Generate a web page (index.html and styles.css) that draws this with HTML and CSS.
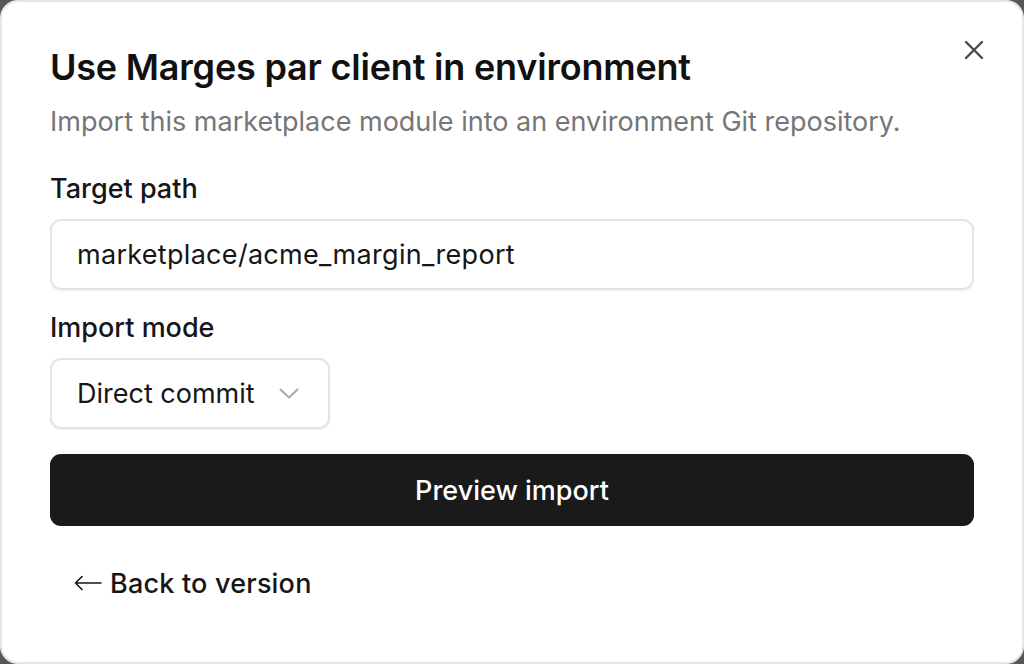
FILE: index.html
```html
<!DOCTYPE html>
<html lang="en">
<head>
  <meta charset="UTF-8" />
  <meta name="viewport" content="width=device-width, initial-scale=1.0" />
  <title>Use in environment</title>
  <link rel="stylesheet" href="styles.css">
</head>
<body>
  <div class="dialog">
    <button class="close" aria-label="Close">
      <svg width="20" height="20" viewBox="0 0 20 20" fill="none" stroke="currentColor" stroke-width="2.4" stroke-linecap="round">
        <path d="M2 2 L18 18 M18 2 L2 18" />
      </svg>
    </button>
    <h2 class="title">Use Marges par client in environment</h2>
    <p class="subtitle">Import this marketplace module into an environment Git repository.</p>

    <div class="field">
      <label class="label" for="path">Target path</label>
      <input class="input" id="path" type="text" value="marketplace/acme_margin_report">
    </div>

    <div class="field">
      <label class="label">Import mode</label>
      <div class="select">
        <span>Direct commit</span>
        <svg width="20" height="11" viewBox="0 0 20 11" fill="none" stroke="currentColor" stroke-width="2" stroke-linecap="round" stroke-linejoin="round">
          <path d="M1.5 1.5 L10 9.5 L18.5 1.5" />
        </svg>
      </div>
    </div>

    <button class="button-fill">Preview import</button>
    <button class="button-ghost">
      <svg width="28" height="16" viewBox="0 0 28 16" fill="none" stroke="currentColor" stroke-width="1.6" stroke-linecap="round" stroke-linejoin="round">
        <path d="M1.5 8 H27 M8 1.5 L1.5 8 L8 14.5" />
      </svg>
      <span>Back to version</span>
    </button>
  </div>
</body>
</html>
```

FILE: styles.css
```css
body {
  margin: 0;
  background-color: #575757;
  font-family: 'Inter', 'Noto Sans', sans-serif;
  overflow: hidden;
}

.dialog {
  position: relative;
  box-sizing: border-box;
  width: 1024px;
  height: 664px;
  background-color: #ffffff;
  border: 2px solid #e6e6e6;
  border-radius: 18px;
  padding: 44px 48px 0 48px;
  display: flex;
  flex-direction: column;
  align-items: flex-start;
}

.close {
  position: absolute;
  top: 36px;
  right: 36px;
  width: 24px;
  height: 24px;
  padding: 2px;
  border: none;
  background: transparent;
  color: #4a4a4a;
  cursor: pointer;
}

.title {
  margin: 0;
  font-size: 36px;
  line-height: 42px;
  font-weight: 600;
  color: #111111;
  letter-spacing: -0.2px;
}

.subtitle {
  margin: 18px 0 0 0;
  font-size: 27px;
  line-height: 32px;
  font-weight: 400;
  color: #767676;
}

.field {
  width: 100%;
  display: flex;
  flex-direction: column;
  align-items: flex-start;
  gap: 14px;
  margin-top: 35px;
}

.field + .field {
  margin-top: 22px;
}

.label {
  font-size: 27px;
  line-height: 32px;
  font-weight: 500;
  color: #161616;
}

.input, .select {
  box-sizing: border-box;
  height: 71px;
  border: 2px solid #e4e4e4;
  border-radius: 11px;
  background-color: #ffffff;
  box-shadow: 0 1px 2px rgba(0, 0, 0, 0.06);
  font-family: 'Inter', 'Noto Sans', sans-serif;
  font-size: 27px;
  color: #161616;
}

.input {
  width: 100%;
  padding: 0 25px;
  outline: none;
  letter-spacing: 0.3px;
}

.select {
  display: flex;
  align-items: center;
  gap: 24px;
  padding: 0 29px 0 25px;
}

.select svg {
  color: #a8a8a8;
}

.button-fill {
  width: 100%;
  height: 72px;
  margin-top: 25px;
  border: none;
  border-radius: 11px;
  background-color: #1a1a1a;
  color: #ffffff;
  font-family: 'Inter', 'Noto Sans', sans-serif;
  font-size: 27px;
  font-weight: 500;
  cursor: pointer;
}

.button-ghost {
  display: flex;
  align-items: center;
  gap: 8px;
  height: 70px;
  margin-top: 22px;
  padding: 0 24px;
  border: none;
  border-radius: 11px;
  background: transparent;
  color: #161616;
  font-family: 'Inter', 'Noto Sans', sans-serif;
  font-size: 27px;
  font-weight: 500;
  letter-spacing: 0.2px;
  cursor: pointer;
}
```
